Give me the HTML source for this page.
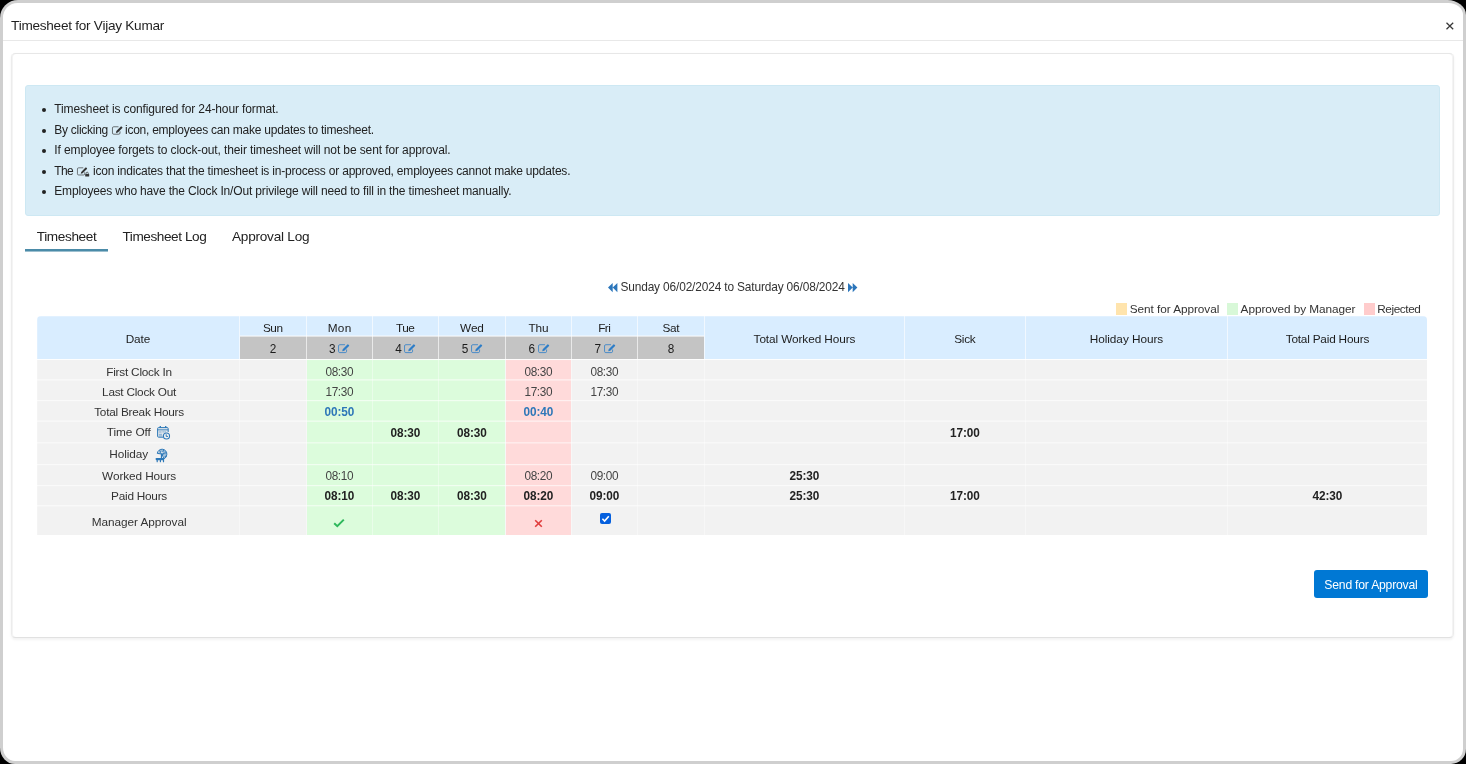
<!DOCTYPE html>
<html><head><meta charset="utf-8"><title>Timesheet</title>
<style>
*{box-sizing:border-box;margin:0;padding:0}
html,body{width:1466px;height:764px;overflow:hidden;background:#000;}
body{font-family:"Liberation Sans",sans-serif;font-size:11.8px;color:#222;position:relative}
.a{position:absolute}
.t{position:absolute;white-space:nowrap;height:20px;line-height:20px}
.c{text-align:center}
svg{position:absolute;overflow:visible}
#root{position:absolute;left:0;top:0;width:1466px;height:764px;will-change:transform}
</style></head>
<body>
<div id="root">
<div class="a" style="left:0;top:0;width:1466px;height:764px;background:#cfcfcf;border-radius:18px 18.5px 15px 15px / 18px 15px 15px 16.5px"></div>
<div class="a" style="left:3px;top:2.75px;width:1460px;height:758.25px;background:#fff;border-radius:14.5px 14.5px 12px 12px / 14.5px 12px 12px 13.5px"></div>
<div class="t" id="t0" style="top:15.54px;font-size:13.6px;color:#1f1f1f;letter-spacing:-0.260px;left:11.11px;">Timesheet for Vijay Kumar</div>
<svg style="left:1446px;top:22px" width="8" height="8" viewBox="0 0 8 8"><path d="M0.5 0.7 L7.2 7.3 M7.2 0.7 L0.5 7.3" stroke="#383838" stroke-width="1.25" fill="none"/></svg>
<div class="a" style="left:3px;top:40px;width:1460px;height:1px;background:#e8e8e8;"></div>
<div class="a" style="left:11px;top:53px;width:1443px;height:585px;border:1px solid #ececec;border-top-color:#e7e7e7;border-bottom-color:#e1e1e1;border-radius:4.5px;background:#fff;box-shadow:0 1.5px 2.5px rgba(0,0,0,0.05),inset 1px 0 0 #f4f4f4,inset -1px 0 0 #f4f4f4"></div>
<div class="a" style="left:25px;top:85px;width:1415px;height:130.5px;background:#d9edf7;border:1px solid #cde8f3;border-radius:3px"></div>
<div class="a" style="left:41.6px;top:107.5px;width:4.3px;height:4.3px;border-radius:50%;background:#222"></div>
<div class="a" style="left:41.6px;top:128.5px;width:4.3px;height:4.3px;border-radius:50%;background:#222"></div>
<div class="a" style="left:41.6px;top:148.5px;width:4.3px;height:4.3px;border-radius:50%;background:#222"></div>
<div class="a" style="left:41.6px;top:169.5px;width:4.3px;height:4.3px;border-radius:50%;background:#222"></div>
<div class="a" style="left:41.6px;top:189.5px;width:4.3px;height:4.3px;border-radius:50%;background:#222"></div>
<div class="t" id="t1" style="top:99.09px;font-size:12.0px;color:#222;letter-spacing:-0.127px;left:54.27px;">Timesheet is configured for 24-hour format.</div>
<div class="t" id="t2" style="top:120.09px;font-size:12.0px;color:#222;letter-spacing:-0.270px;left:54.27px;">By clicking</div>
<svg style="left:111.6px;top:125.6px;opacity:1" width="10.8" height="8.8" viewBox="0 0 11.6 9.2"><path d="M8.6 5.6 V7.4 A1.3 1.3 0 0 1 7.3 8.7 H1.8 A1.3 1.3 0 0 1 0.5 7.4 V2 A1.3 1.3 0 0 1 1.8 0.7 H7" fill="none" stroke="#333" stroke-width="0.9" stroke-opacity="0.8"/><path d="M4.7 5.3 L9.5 0.5 Q9.9 0.1 10.3 0.5 L11.1 1.3 Q11.5 1.7 11.1 2.1 L6.3 6.9 L4.2 7.3 Z" fill="#333"/></svg>
<div class="t" id="t3" style="top:120.09px;font-size:12.0px;color:#222;letter-spacing:-0.244px;left:124.97px;">icon, employees can make updates to timesheet.</div>
<div class="t" id="t4" style="top:140.09px;font-size:12.0px;color:#222;letter-spacing:-0.108px;left:54.27px;">If employee forgets to clock-out, their timesheet will not be sent for approval.</div>
<div class="t" id="t5" style="top:161.09px;font-size:12.0px;color:#222;letter-spacing:-0.656px;left:54.27px;">The</div>
<svg style="left:76.8px;top:167.3px;opacity:1" width="10.4" height="8.6" viewBox="0 0 11.6 9.2"><path d="M8.6 5.6 V7.4 A1.3 1.3 0 0 1 7.3 8.7 H1.8 A1.3 1.3 0 0 1 0.5 7.4 V2 A1.3 1.3 0 0 1 1.8 0.7 H7" fill="none" stroke="#333" stroke-width="0.9" stroke-opacity="0.8"/><path d="M4.7 5.3 L9.5 0.5 Q9.9 0.1 10.3 0.5 L11.1 1.3 Q11.5 1.7 11.1 2.1 L6.3 6.9 L4.2 7.3 Z" fill="#333"/></svg>
<svg style="left:84.6px;top:172px" width="4.4" height="4.6" viewBox="0 0 4.4 4.6"><rect x="0.2" y="1.9" width="4" height="2.7" rx="0.5" fill="#333"/><path d="M1.1 2 V1.3 A1.1 1.1 0 0 1 3.3 1.3 V2" fill="none" stroke="#333" stroke-width="0.7"/></svg>
<div class="t" id="t6" style="top:161.09px;font-size:12.0px;color:#222;letter-spacing:-0.201px;left:92.97px;">icon indicates that the timesheet is in-process or approved, employees cannot make updates.</div>
<div class="t" id="t7" style="top:181.09px;font-size:12.0px;color:#222;letter-spacing:-0.159px;left:54.27px;">Employees who have the Clock In/Out privilege will need to fill in the timesheet manually.</div>
<div class="t" id="t8" style="top:226.54px;font-size:13.6px;color:#222;letter-spacing:-0.373px;left:36.81px;">Timesheet</div>
<div class="t" id="t9" style="top:226.54px;font-size:13.6px;color:#222;letter-spacing:-0.431px;left:122.51px;">Timesheet Log</div>
<div class="t" id="t10" style="top:226.54px;font-size:13.6px;color:#222;letter-spacing:-0.233px;left:232.01px;">Approval Log</div>
<div class="a" style="left:25px;top:249px;width:83px;height:2px;background:#4b8ba8;"></div>
<div class="a" style="left:25px;top:251px;width:83px;height:1px;background:#4b8ba8;opacity:.55;"></div>
<div class="t" id="t11" style="top:277.13px;font-size:11.9px;color:#333;letter-spacing:-0.147px;left:620.47px;">Sunday 06/02/2024 to Saturday 06/08/2024</div>
<svg style="left:607.7px;top:282.7px" width="9.4" height="9.2" viewBox="0 0 9.4 9.2"><path d="M4.7 0 V9.2 L0 4.6 Z M9.4 0 V9.2 L4.7 4.6 Z" fill="#2c76bb"/></svg>
<svg style="left:848px;top:282.7px" width="9.4" height="9.2" viewBox="0 0 9.4 9.2"><path d="M0 0 V9.2 L4.7 4.6 Z M4.7 0 V9.2 L9.4 4.6 Z" fill="#2c76bb"/></svg>
<div class="a" style="left:1116px;top:303.4px;width:11.4px;height:12.0px;background:#ffe4ad;"></div>
<div class="t" id="t12" style="top:299.16px;font-size:11.8px;color:#333;letter-spacing:-0.058px;left:1129.78px;">Sent for Approval</div>
<div class="a" style="left:1227px;top:303.4px;width:11px;height:12.0px;background:#d8f8d8;"></div>
<div class="t" id="t13" style="top:299.16px;font-size:11.8px;color:#333;letter-spacing:-0.062px;left:1240.58px;">Approved by Manager</div>
<div class="a" style="left:1363.5px;top:303.4px;width:11.5px;height:12.0px;background:#ffcccc;"></div>
<div class="t" id="t14" style="top:299.16px;font-size:11.8px;color:#333;letter-spacing:-0.419px;left:1377.28px;">Rejected</div>
<div class="a" style="left:37px;top:316px;width:1390px;height:43px;background:#d9edff;border-top-left-radius:4px;border-top-right-radius:4px;"></div>
<div class="a" style="left:240px;top:336px;width:464px;height:23px;background:#c4c4c4;"></div>
<div class="a" style="left:37px;top:359px;width:1390px;height:176px;background:#f2f2f2;"></div>
<div class="a" style="left:307px;top:359px;width:198px;height:176px;background:#dcfcdc;"></div>
<div class="a" style="left:506px;top:359px;width:65px;height:176px;background:#ffdada;"></div>
<div class="a" style="left:239px;top:316px;width:1px;height:43px;background:rgba(255,255,255,0.62)"></div>
<div class="a" style="left:239px;top:359px;width:1px;height:176px;background:rgba(255,255,255,0.38)"></div>
<div class="a" style="left:306px;top:316px;width:1px;height:43px;background:rgba(255,255,255,0.62)"></div>
<div class="a" style="left:306px;top:359px;width:1px;height:176px;background:rgba(255,255,255,0.38)"></div>
<div class="a" style="left:372px;top:316px;width:1px;height:43px;background:rgba(255,255,255,0.62)"></div>
<div class="a" style="left:372px;top:359px;width:1px;height:176px;background:rgba(255,255,255,0.38)"></div>
<div class="a" style="left:438px;top:316px;width:1px;height:43px;background:rgba(255,255,255,0.62)"></div>
<div class="a" style="left:438px;top:359px;width:1px;height:176px;background:rgba(255,255,255,0.38)"></div>
<div class="a" style="left:505px;top:316px;width:1px;height:43px;background:rgba(255,255,255,0.62)"></div>
<div class="a" style="left:505px;top:359px;width:1px;height:176px;background:rgba(255,255,255,0.38)"></div>
<div class="a" style="left:571px;top:316px;width:1px;height:43px;background:rgba(255,255,255,0.62)"></div>
<div class="a" style="left:571px;top:359px;width:1px;height:176px;background:rgba(255,255,255,0.38)"></div>
<div class="a" style="left:637px;top:316px;width:1px;height:43px;background:rgba(255,255,255,0.62)"></div>
<div class="a" style="left:637px;top:359px;width:1px;height:176px;background:rgba(255,255,255,0.38)"></div>
<div class="a" style="left:704px;top:316px;width:1px;height:43px;background:rgba(255,255,255,0.62)"></div>
<div class="a" style="left:704px;top:359px;width:1px;height:176px;background:rgba(255,255,255,0.38)"></div>
<div class="a" style="left:904px;top:316px;width:1px;height:43px;background:rgba(255,255,255,0.62)"></div>
<div class="a" style="left:904px;top:359px;width:1px;height:176px;background:rgba(255,255,255,0.38)"></div>
<div class="a" style="left:1025px;top:316px;width:1px;height:43px;background:rgba(255,255,255,0.62)"></div>
<div class="a" style="left:1025px;top:359px;width:1px;height:176px;background:rgba(255,255,255,0.38)"></div>
<div class="a" style="left:1227px;top:316px;width:1px;height:43px;background:rgba(255,255,255,0.62)"></div>
<div class="a" style="left:1227px;top:359px;width:1px;height:176px;background:rgba(255,255,255,0.38)"></div>
<div class="a" style="left:240px;top:335px;width:464px;height:1px;background:rgba(255,255,255,0.4)"></div>
<div class="a" style="left:240px;top:336px;width:464px;height:1px;background:rgba(255,255,255,0.55)"></div>
<div class="a" style="left:37px;top:359px;width:1390px;height:1px;background:rgba(255,255,255,0.9)"></div>
<div class="a" style="left:37px;top:360px;width:1390px;height:1px;background:rgba(255,255,255,0.05)"></div>
<div class="a" style="left:37px;top:379px;width:1390px;height:1px;background:rgba(255,255,255,0.45)"></div>
<div class="a" style="left:37px;top:380px;width:1390px;height:1px;background:rgba(255,255,255,0.32)"></div>
<div class="a" style="left:37px;top:400px;width:1390px;height:1px;background:rgba(255,255,255,0.6)"></div>
<div class="a" style="left:37px;top:401px;width:1390px;height:1px;background:rgba(255,255,255,0.12)"></div>
<div class="a" style="left:37px;top:420px;width:1390px;height:1px;background:rgba(255,255,255,0.3)"></div>
<div class="a" style="left:37px;top:421px;width:1390px;height:1px;background:rgba(255,255,255,0.48)"></div>
<div class="a" style="left:37px;top:442px;width:1390px;height:1px;background:rgba(255,255,255,0.45)"></div>
<div class="a" style="left:37px;top:443px;width:1390px;height:1px;background:rgba(255,255,255,0.27)"></div>
<div class="a" style="left:37px;top:464px;width:1390px;height:1px;background:rgba(255,255,255,0.6)"></div>
<div class="a" style="left:37px;top:465px;width:1390px;height:1px;background:rgba(255,255,255,0.12)"></div>
<div class="a" style="left:37px;top:485px;width:1390px;height:1px;background:rgba(255,255,255,0.6)"></div>
<div class="a" style="left:37px;top:486px;width:1390px;height:1px;background:rgba(255,255,255,0.12)"></div>
<div class="a" style="left:37px;top:505px;width:1390px;height:1px;background:rgba(255,255,255,0.5)"></div>
<div class="a" style="left:37px;top:506px;width:1390px;height:1px;background:rgba(255,255,255,0.22)"></div>
<div class="a" style="left:37px;top:316px;width:1px;height:219px;background:rgba(255,255,255,0.2)"></div>
<div class="a" style="left:37px;top:316px;width:1390px;height:1px;background:rgba(255,255,255,0.25)"></div>
<div class="t c" id="t15" style="top:329.16px;font-size:11.8px;color:#1c1c1c;letter-spacing:-0.128px;left:37px;width:201.87px;">Date</div>
<div class="t c" id="t16" style="top:318.16px;font-size:11.8px;color:#1c1c1c;letter-spacing:-0.397px;left:240px;width:65.6px;">Sun</div>
<div class="t c" id="t17" style="top:339.16px;font-size:11.8px;color:#1c1c1c;transform:scaleY(1.035);transform-origin:50% 14.09px;left:240px;width:66px;">2</div>
<div class="t c" id="t18" style="top:318.16px;font-size:11.8px;color:#1c1c1c;letter-spacing:0.318px;left:307px;width:65.32px;">Mon</div>
<div class="t" id="t19" style="top:339.16px;font-size:11.8px;color:#1c1c1c;transform:scaleY(1.035);transform-origin:50% 14.09px;left:328.88px;">3</div>
<svg style="left:337.9px;top:344.0px;opacity:1" width="11.6" height="9.1" viewBox="0 0 11.6 9.2"><path d="M8.6 5.6 V7.4 A1.3 1.3 0 0 1 7.3 8.7 H1.8 A1.3 1.3 0 0 1 0.5 7.4 V2 A1.3 1.3 0 0 1 1.8 0.7 H7" fill="none" stroke="#2d7dc8" stroke-width="1.0" stroke-opacity="0.8"/><path d="M4.7 5.3 L9.5 0.5 Q9.9 0.1 10.3 0.5 L11.1 1.3 Q11.5 1.7 11.1 2.1 L6.3 6.9 L4.2 7.3 Z" fill="#2d7dc8"/></svg>
<div class="t c" id="t20" style="top:318.16px;font-size:11.8px;color:#1c1c1c;letter-spacing:-0.561px;left:373px;width:64.44px;">Tue</div>
<div class="t" id="t21" style="top:339.16px;font-size:11.8px;color:#1c1c1c;transform:scaleY(1.035);transform-origin:50% 14.09px;left:395.18px;">4</div>
<svg style="left:404.2px;top:344.0px;opacity:1" width="11.6" height="9.1" viewBox="0 0 11.6 9.2"><path d="M8.6 5.6 V7.4 A1.3 1.3 0 0 1 7.3 8.7 H1.8 A1.3 1.3 0 0 1 0.5 7.4 V2 A1.3 1.3 0 0 1 1.8 0.7 H7" fill="none" stroke="#2d7dc8" stroke-width="1.0" stroke-opacity="0.8"/><path d="M4.7 5.3 L9.5 0.5 Q9.9 0.1 10.3 0.5 L11.1 1.3 Q11.5 1.7 11.1 2.1 L6.3 6.9 L4.2 7.3 Z" fill="#2d7dc8"/></svg>
<div class="t c" id="t22" style="top:318.16px;font-size:11.8px;color:#1c1c1c;letter-spacing:-0.146px;left:439px;width:65.85px;">Wed</div>
<div class="t" id="t23" style="top:339.16px;font-size:11.8px;color:#1c1c1c;transform:scaleY(1.035);transform-origin:50% 14.09px;left:461.78px;">5</div>
<svg style="left:470.8px;top:344.0px;opacity:1" width="11.6" height="9.1" viewBox="0 0 11.6 9.2"><path d="M8.6 5.6 V7.4 A1.3 1.3 0 0 1 7.3 8.7 H1.8 A1.3 1.3 0 0 1 0.5 7.4 V2 A1.3 1.3 0 0 1 1.8 0.7 H7" fill="none" stroke="#2d7dc8" stroke-width="1.0" stroke-opacity="0.8"/><path d="M4.7 5.3 L9.5 0.5 Q9.9 0.1 10.3 0.5 L11.1 1.3 Q11.5 1.7 11.1 2.1 L6.3 6.9 L4.2 7.3 Z" fill="#2d7dc8"/></svg>
<div class="t c" id="t24" style="top:318.16px;font-size:11.8px;color:#1c1c1c;letter-spacing:-0.173px;left:506px;width:64.83px;">Thu</div>
<div class="t" id="t25" style="top:339.16px;font-size:11.8px;color:#1c1c1c;transform:scaleY(1.035);transform-origin:50% 14.09px;left:528.48px;">6</div>
<svg style="left:537.5px;top:344.0px;opacity:1" width="11.6" height="9.1" viewBox="0 0 11.6 9.2"><path d="M8.6 5.6 V7.4 A1.3 1.3 0 0 1 7.3 8.7 H1.8 A1.3 1.3 0 0 1 0.5 7.4 V2 A1.3 1.3 0 0 1 1.8 0.7 H7" fill="none" stroke="#2d7dc8" stroke-width="1.0" stroke-opacity="0.8"/><path d="M4.7 5.3 L9.5 0.5 Q9.9 0.1 10.3 0.5 L11.1 1.3 Q11.5 1.7 11.1 2.1 L6.3 6.9 L4.2 7.3 Z" fill="#2d7dc8"/></svg>
<div class="t c" id="t26" style="top:318.16px;font-size:11.8px;color:#1c1c1c;letter-spacing:-0.519px;left:572px;width:64.48px;">Fri</div>
<div class="t" id="t27" style="top:339.16px;font-size:11.8px;color:#1c1c1c;transform:scaleY(1.035);transform-origin:50% 14.09px;left:594.58px;">7</div>
<svg style="left:603.6px;top:344.0px;opacity:1" width="11.6" height="9.1" viewBox="0 0 11.6 9.2"><path d="M8.6 5.6 V7.4 A1.3 1.3 0 0 1 7.3 8.7 H1.8 A1.3 1.3 0 0 1 0.5 7.4 V2 A1.3 1.3 0 0 1 1.8 0.7 H7" fill="none" stroke="#2d7dc8" stroke-width="1.0" stroke-opacity="0.8"/><path d="M4.7 5.3 L9.5 0.5 Q9.9 0.1 10.3 0.5 L11.1 1.3 Q11.5 1.7 11.1 2.1 L6.3 6.9 L4.2 7.3 Z" fill="#2d7dc8"/></svg>
<div class="t c" id="t28" style="top:318.16px;font-size:11.8px;color:#1c1c1c;letter-spacing:-0.404px;left:638px;width:65.6px;">Sat</div>
<div class="t c" id="t29" style="top:339.16px;font-size:11.8px;color:#1c1c1c;transform:scaleY(1.035);transform-origin:50% 14.09px;left:638px;width:66px;">8</div>
<div class="t c" id="t30" style="top:329.16px;font-size:11.8px;color:#1c1c1c;letter-spacing:-0.093px;left:705px;width:198.91px;">Total Worked Hours</div>
<div class="t c" id="t31" style="top:329.16px;font-size:11.8px;color:#1c1c1c;letter-spacing:-0.297px;left:905px;width:119.7px;">Sick</div>
<div class="t c" id="t32" style="top:329.16px;font-size:11.8px;color:#1c1c1c;letter-spacing:-0.045px;left:1026px;width:200.95px;">Holiday Hours</div>
<div class="t c" id="t33" style="top:329.16px;font-size:11.8px;color:#1c1c1c;letter-spacing:-0.197px;left:1228px;width:198.8px;">Total Paid Hours</div>
<div class="t c" id="t34" style="top:362.16px;font-size:11.8px;color:#333;letter-spacing:-0.223px;left:38.2px;width:201.78px;">First Clock In</div>
<div class="t c" id="t35" style="top:382.16px;font-size:11.8px;color:#333;letter-spacing:-0.241px;left:38.2px;width:201.76px;">Last Clock Out</div>
<div class="t c" id="t36" style="top:402.16px;font-size:11.8px;color:#333;letter-spacing:-0.233px;left:38.2px;width:201.77px;">Total Break Hours</div>
<div class="t" id="t37" style="top:422.16px;font-size:11.8px;color:#333;letter-spacing:-0.071px;left:106.78px;">Time Off</div>
<div class="t" id="t38" style="top:444.16px;font-size:11.8px;color:#333;letter-spacing:-0.062px;left:109.18px;">Holiday</div>
<div class="t c" id="t39" style="top:466.16px;font-size:11.8px;color:#333;letter-spacing:-0.090px;left:38.2px;width:201.91px;">Worked Hours</div>
<div class="t c" id="t40" style="top:486.16px;font-size:11.8px;color:#333;letter-spacing:-0.245px;left:38.2px;width:201.75px;">Paid Hours</div>
<div class="t c" id="t41" style="top:512.16px;font-size:11.8px;color:#333;letter-spacing:-0.065px;left:38.2px;width:201.93px;">Manager Approval</div>
<div class="t c" id="t42" style="top:362.16px;font-size:11.8px;color:#444;transform:scaleY(1.035);transform-origin:50% 14.09px;letter-spacing:-0.365px;left:307px;width:64.64px;">08:30</div>
<div class="t c" id="t43" style="top:362.16px;font-size:11.8px;color:#444;transform:scaleY(1.035);transform-origin:50% 14.09px;letter-spacing:-0.365px;left:506px;width:64.64px;">08:30</div>
<div class="t c" id="t44" style="top:362.16px;font-size:11.8px;color:#444;transform:scaleY(1.035);transform-origin:50% 14.09px;letter-spacing:-0.365px;left:572px;width:64.64px;">08:30</div>
<div class="t c" id="t45" style="top:382.16px;font-size:11.8px;color:#444;transform:scaleY(1.035);transform-origin:50% 14.09px;letter-spacing:-0.365px;left:307px;width:64.64px;">17:30</div>
<div class="t c" id="t46" style="top:382.16px;font-size:11.8px;color:#444;transform:scaleY(1.035);transform-origin:50% 14.09px;letter-spacing:-0.365px;left:506px;width:64.64px;">17:30</div>
<div class="t c" id="t47" style="top:382.16px;font-size:11.8px;color:#444;transform:scaleY(1.035);transform-origin:50% 14.09px;letter-spacing:-0.365px;left:572px;width:64.64px;">17:30</div>
<div class="t c" id="t48" style="top:402.16px;font-size:11.8px;color:#2e77b8;font-weight:bold;transform:scaleY(1.035);transform-origin:50% 14.09px;letter-spacing:-0.096px;left:307px;width:64.9px;">00:50</div>
<div class="t c" id="t49" style="top:402.16px;font-size:11.8px;color:#2e77b8;font-weight:bold;transform:scaleY(1.035);transform-origin:50% 14.09px;letter-spacing:-0.096px;left:506px;width:64.9px;">00:40</div>
<div class="t c" id="t50" style="top:423.16px;font-size:11.8px;color:#222;font-weight:bold;transform:scaleY(1.035);transform-origin:50% 14.09px;letter-spacing:-0.096px;left:373px;width:64.9px;">08:30</div>
<div class="t c" id="t51" style="top:423.16px;font-size:11.8px;color:#222;font-weight:bold;transform:scaleY(1.035);transform-origin:50% 14.09px;letter-spacing:-0.096px;left:439px;width:65.9px;">08:30</div>
<div class="t c" id="t52" style="top:423.16px;font-size:11.8px;color:#222;font-weight:bold;transform:scaleY(1.035);transform-origin:50% 14.09px;letter-spacing:-0.096px;left:905px;width:119.9px;">17:00</div>
<div class="t c" id="t53" style="top:466.16px;font-size:11.8px;color:#444;transform:scaleY(1.035);transform-origin:50% 14.09px;letter-spacing:-0.365px;left:307px;width:64.64px;">08:10</div>
<div class="t c" id="t54" style="top:466.16px;font-size:11.8px;color:#444;transform:scaleY(1.035);transform-origin:50% 14.09px;letter-spacing:-0.365px;left:506px;width:64.64px;">08:20</div>
<div class="t c" id="t55" style="top:466.16px;font-size:11.8px;color:#444;transform:scaleY(1.035);transform-origin:50% 14.09px;letter-spacing:-0.365px;left:572px;width:64.64px;">09:00</div>
<div class="t c" id="t56" style="top:466.16px;font-size:11.8px;color:#222;font-weight:bold;transform:scaleY(1.035);transform-origin:50% 14.09px;letter-spacing:-0.096px;left:705px;width:198.9px;">25:30</div>
<div class="t c" id="t57" style="top:486.16px;font-size:11.8px;color:#222;font-weight:bold;transform:scaleY(1.035);transform-origin:50% 14.09px;letter-spacing:-0.096px;left:307px;width:64.9px;">08:10</div>
<div class="t c" id="t58" style="top:486.16px;font-size:11.8px;color:#222;font-weight:bold;transform:scaleY(1.035);transform-origin:50% 14.09px;letter-spacing:-0.096px;left:373px;width:64.9px;">08:30</div>
<div class="t c" id="t59" style="top:486.16px;font-size:11.8px;color:#222;font-weight:bold;transform:scaleY(1.035);transform-origin:50% 14.09px;letter-spacing:-0.096px;left:439px;width:65.9px;">08:30</div>
<div class="t c" id="t60" style="top:486.16px;font-size:11.8px;color:#222;font-weight:bold;transform:scaleY(1.035);transform-origin:50% 14.09px;letter-spacing:-0.096px;left:506px;width:64.9px;">08:20</div>
<div class="t c" id="t61" style="top:486.16px;font-size:11.8px;color:#222;font-weight:bold;transform:scaleY(1.035);transform-origin:50% 14.09px;letter-spacing:-0.096px;left:572px;width:64.9px;">09:00</div>
<div class="t c" id="t62" style="top:486.16px;font-size:11.8px;color:#222;font-weight:bold;transform:scaleY(1.035);transform-origin:50% 14.09px;letter-spacing:-0.096px;left:705px;width:198.9px;">25:30</div>
<div class="t c" id="t63" style="top:486.16px;font-size:11.8px;color:#222;font-weight:bold;transform:scaleY(1.035);transform-origin:50% 14.09px;letter-spacing:-0.096px;left:905px;width:119.9px;">17:00</div>
<div class="t c" id="t64" style="top:486.16px;font-size:11.8px;color:#222;font-weight:bold;transform:scaleY(1.035);transform-origin:50% 14.09px;letter-spacing:-0.096px;left:1228px;width:198.9px;">42:30</div>
<svg style="left:156.8px;top:425.9px" width="13.2" height="13.8" viewBox="0 0 13.2 13.8"><path d="M0.6 1.6 H11.2 V11.2 H0.6 Z" fill="#2d78b8" fill-opacity=".07"/><g fill="none" stroke="#2d78b8" stroke-width="1"><path d="M6.2 11.2 H1.6 A1 1 0 0 1 0.6 10.2 V2.6 A1 1 0 0 1 1.6 1.6 H10.2 A1 1 0 0 1 11.2 2.6 V6"/><path d="M0.6 3.85 H11.2" stroke-width="0.9"/><path d="M3.3 0.1 V1.8 M8.7 0.1 V1.8" stroke-width="1.3"/><path d="M1.8 6.0 H4.6 M1.8 8.3 H5 M1.8 9.9 H5.4" stroke-opacity=".55"/><path d="M5.6 5.9 H6.6 M7.6 5.9 H8.6" stroke-opacity=".85"/></g><circle cx="9.5" cy="10" r="3.05" fill="#f2f2f2" stroke="#2d78b8" stroke-width="1.1"/><path d="M9.2 8.3 V10.4 H11" fill="none" stroke="#2d78b8" stroke-width="1"/></svg>
<svg style="left:150px;top:444px" width="24" height="22" viewBox="0 0 24 22"><path d="M7.3 9.4 A4.75 4.75 0 0 1 16.8 10.6 A4.75 4.75 0 0 1 14.3 14.7 L11.6 10 Z" fill="#2d78b8" fill-opacity=".45" stroke="#2d78b8" stroke-width="1" stroke-linejoin="round"/><path d="M11.6 10 L9.7 6.4 M11.6 10 L13.7 6 M11.6 10 L16.5 8.6 M11.6 10 L16.2 12.8" stroke="#2d78b8" stroke-width="0.9" fill="none"/><circle cx="12" cy="8.6" r="0.85" fill="#f2f2f2"/><path d="M13 11.4 L15.2 10.8 L13.8 12.8 Z" fill="#f2f2f2" fill-opacity=".85"/><circle cx="8.7" cy="8.1" r="0.55" fill="#f2f2f2" fill-opacity=".8"/><path d="M11.5 9.8 V14.4" stroke="#2d78b8" stroke-width="1.3"/><rect x="5.7" y="13.9" width="8.5" height="2.3" rx="0.7" fill="#2d78b8"/><path d="M7.2 16 V17.7 M10.4 16 V17.7 M13.5 16 V17.7" stroke="#2d78b8" stroke-width="1.2" stroke-linecap="round"/></svg>
<svg style="left:332.5px;top:517.5px" width="12" height="10" viewBox="0 0 12 10"><path d="M1.2 5.2 L4.3 8.2 L10.8 1.6" fill="none" stroke="#2eb85c" stroke-width="2"/></svg>
<svg style="left:533.5px;top:518.5px" width="9" height="9" viewBox="0 0 9 9"><path d="M1.2 1.2 L7.8 7.8 M7.8 1.2 L1.2 7.8" fill="none" stroke="#e03c3c" stroke-width="1.6"/></svg>
<div class="a" style="left:600px;top:513px;width:11.2px;height:11.2px;background:#0560de;border-radius:2px"></div>
<svg style="left:600px;top:513px" width="11.2" height="11.2" viewBox="0 0 11.2 11.2"><path d="M2.4 5.8 L4.6 8 L8.8 3.2" fill="none" stroke="#fff" stroke-width="1.6"/></svg>
<div class="a" style="left:1314px;top:570px;width:114px;height:28px;background:#0078d4;border-radius:3px"></div>
<div class="t" id="t65" style="top:575.02px;font-size:12.2px;color:#fff;letter-spacing:-0.221px;left:1324.36px;">Send for Approval</div>
</div>
</body></html>
